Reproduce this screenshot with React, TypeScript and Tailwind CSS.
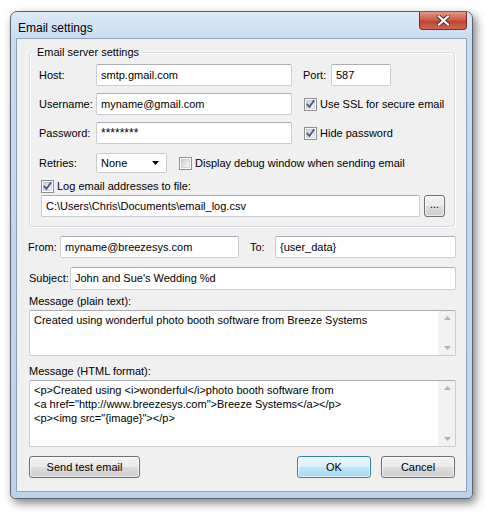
import type { ReactNode } from "react";

function TextBox({ className = "", children }: { className?: string; children?: ReactNode }) {
  return (
    <div
      className={`flex h-[22px] items-center rounded-[2px] border border-[#c9ccd2] border-t-[#abadb3] bg-white px-[4px] whitespace-pre ${className}`}
    >
      {children}
    </div>
  );
}

function CheckBox({ checked = false }: { checked?: boolean }) {
  return (
    <svg width="13" height="13" viewBox="0 0 13 13" className="shrink-0">
      <defs>
        <linearGradient id="cbfill" x1="0" y1="0" x2="1" y2="1">
          <stop offset="0" stopColor="#cbcfd5" />
          <stop offset="1" stopColor="#f7f8f9" />
        </linearGradient>
      </defs>
      <rect x="0.5" y="0.5" width="12" height="12" fill="#fff" stroke="#8e8f8f" />
      <rect x="2.5" y="2.5" width="8" height="8" fill="url(#cbfill)" stroke="#b9bcc1" strokeWidth="0.6" />
      {checked && (
        <path d="M3.2 6.4 L5.4 9 L9.8 2.8" fill="none" stroke="#44598b" strokeWidth="1.8" strokeLinecap="round" strokeLinejoin="round" />
      )}
    </svg>
  );
}

function Button({ className = "", primary = false, children }: { className?: string; primary?: boolean; children: ReactNode }) {
  return (
    <div
      className={`flex h-[22px] items-center justify-center rounded-[3px] border ${
        primary
          ? "border-[#3c7fb1] bg-[linear-gradient(#eaf6fd_0%,#d9f0fc_50%,#bee6fd_51%,#a7d9f5_100%)] shadow-[inset_0_0_0_1px_rgba(255,255,255,0.7)]"
          : "border-[#707070] bg-[linear-gradient(#f2f2f2_0%,#ebebeb_50%,#dddddd_51%,#cfcfcf_100%)] shadow-[inset_0_0_0_1px_rgba(255,255,255,0.6)]"
      } ${className}`}
    >
      {children}
    </div>
  );
}

function ScrollBar() {
  return (
    <div className="flex w-[17px] flex-col items-center justify-between border-l border-[#f6f6f6] bg-[#f1f1f1] py-[5px]">
      <svg width="7" height="4" viewBox="0 0 7 4">
        <path d="M3.5 0 L7 4 L0 4 Z" fill="#b4b4b4" />
      </svg>
      <svg width="7" height="4" viewBox="0 0 7 4">
        <path d="M0 0 L7 0 L3.5 4 Z" fill="#b4b4b4" />
      </svg>
    </div>
  );
}

function MemoBox({ className = "", children }: { className?: string; children: ReactNode }) {
  return (
    <div className={`ml-[12px] flex w-[427px] rounded-[2px] border border-[#c9ccd2] border-t-[#abadb3] bg-white ${className}`}>
      <div className="flex-1 pl-[4px] pt-[2px] leading-[14px] whitespace-pre">{children}</div>
      <ScrollBar />
    </div>
  );
}

export default function App() {
  return (
    <div className="h-[516px] w-[486px] bg-white pl-[10px] pt-[11px] font-['Liberation_Sans',Arial,sans-serif] text-[11px] text-black">
      <div className="flex h-[488px] w-[463px] flex-col rounded-t-[7px] rounded-b-[5px] border border-[#5b6470] bg-[linear-gradient(#dce9f6_0px,#c7dbf1_30px,#bcd3ed_100%)] px-[5px] pb-[6px] shadow-[3px_4px_10px_rgba(0,0,0,0.5)]">
        {/* title bar */}
        <div className="flex h-[26px] items-start">
          <span className="ml-[2px] mt-[7px] text-[12px]">Email settings</span>
          <div className="ml-auto flex h-[18px] w-[48px] items-center justify-center rounded-b-[4px] border border-t-0 border-[#7a2a22] bg-[linear-gradient(#e39a8a_0%,#cc5e4c_45%,#bc4533_55%,#cf6650_100%)]">
            <svg width="13" height="11" viewBox="0 0 13 11">
              <path d="M2 1.5 L11 9.5 M11 1.5 L2 9.5" stroke="#5a2a26" strokeWidth="4" strokeLinecap="square" />
              <path d="M2 1.5 L11 9.5 M11 1.5 L2 9.5" stroke="#ffffff" strokeWidth="2.2" strokeLinecap="square" />
            </svg>
          </div>
        </div>

        {/* client area */}
        <div className="flex flex-1 flex-col border border-[#8ea4bd] bg-[#f0f0f0]">
          <fieldset className="ml-[12px] mt-[6px] w-[426px] rounded-[3px] border border-[#d5dfe5] pb-[9px] shadow-[inset_1px_1px_0_#fff,1px_1px_0_#fff]">
            <legend className="ml-[5px] px-[2px] leading-[14px]">Email server settings</legend>

            <div className="ml-[9px] mt-[5px] flex items-center">
              <span className="w-[57px]">Host:</span>
              <TextBox className="w-[196px]">smtp.gmail.com</TextBox>
              <span className="ml-[11px] w-[28px]">Port:</span>
              <TextBox className="w-[60px]">587</TextBox>
            </div>

            <div className="ml-[9px] mt-[7px] flex items-center">
              <span className="w-[57px]">Username:</span>
              <TextBox className="w-[196px]">myname@gmail.com</TextBox>
              <span className="ml-[12px] flex items-center gap-[3px]">
                <CheckBox checked />
                <span>Use SSL for secure email</span>
              </span>
            </div>

            <div className="ml-[9px] mt-[7px] flex items-center">
              <span className="w-[57px]">Password:</span>
              <TextBox className="w-[196px] text-[12px]">********</TextBox>
              <span className="ml-[12px] flex items-center gap-[3px]">
                <CheckBox checked />
                <span>Hide password</span>
              </span>
            </div>

            <div className="ml-[9px] mt-[9px] flex items-center">
              <span className="w-[57px]">Retries:</span>
              <div className="flex h-[20px] w-[71px] items-center justify-between rounded-[2px] border border-[#c9ccd2] bg-white pl-[4px] pr-[7px]">
                <span>None</span>
                <svg width="7" height="4" viewBox="0 0 7 4">
                  <path d="M0 0 L7 0 L3.5 4 Z" fill="#000" />
                </svg>
              </div>
              <span className="ml-[12px] flex items-center gap-[3px]">
                <CheckBox />
                <span>Display debug window when sending email</span>
              </span>
            </div>

            <div className="ml-[11px] mt-[6px] flex h-[14px] items-center gap-[3px]">
              <CheckBox checked />
              <span>Log email addresses to file:</span>
            </div>

            <div className="ml-[11px] mt-[2px] flex items-center">
              <TextBox className="w-[379px]">C:\Users\Chris\Documents\email_log.csv</TextBox>
              <Button className="ml-[4px] h-[20px] w-[21px] pb-[3px]">...</Button>
            </div>
          </fieldset>

          <div className="ml-[11px] mt-[9px] flex items-center">
            <span className="w-[32px]">From:</span>
            <TextBox className="w-[179px]">myname@breezesys.com</TextBox>
            <span className="ml-[11px] w-[25px]">To:</span>
            <TextBox className="w-[181px]">{"{user_data}"}</TextBox>
          </div>

          <div className="ml-[12px] mt-[9px] flex items-center">
            <span className="w-[41px]">Subject:</span>
            <TextBox className="h-[23px] w-[386px]">John and Sue's Wedding %d</TextBox>
          </div>

          <div className="ml-[12px] mt-[4px] leading-[14px]">Message (plain text):</div>
          <MemoBox className="mt-[2px] h-[46px]">
            Created using wonderful photo booth software from Breeze Systems
          </MemoBox>

          <div className="ml-[12px] mt-[8px] leading-[14px]">Message (HTML format):</div>
          <MemoBox className="mt-[2px] h-[67px] border-[#7da2ce]">
            {'<p>Created using <i>wonderful</i>photo booth software from\n<a href="http://www.breezesys.com">Breeze Systems</a></p>\n<p><img src="{image}"></p>'}
          </MemoBox>

          <div className="ml-[12px] mt-[9px] flex items-center">
            <Button className="w-[111px]">Send test email</Button>
            <Button primary className="ml-auto w-[74px]">OK</Button>
            <Button className="ml-[10px] mr-[11px] w-[74px]">Cancel</Button>
          </div>
        </div>
      </div>
    </div>
  );
}
